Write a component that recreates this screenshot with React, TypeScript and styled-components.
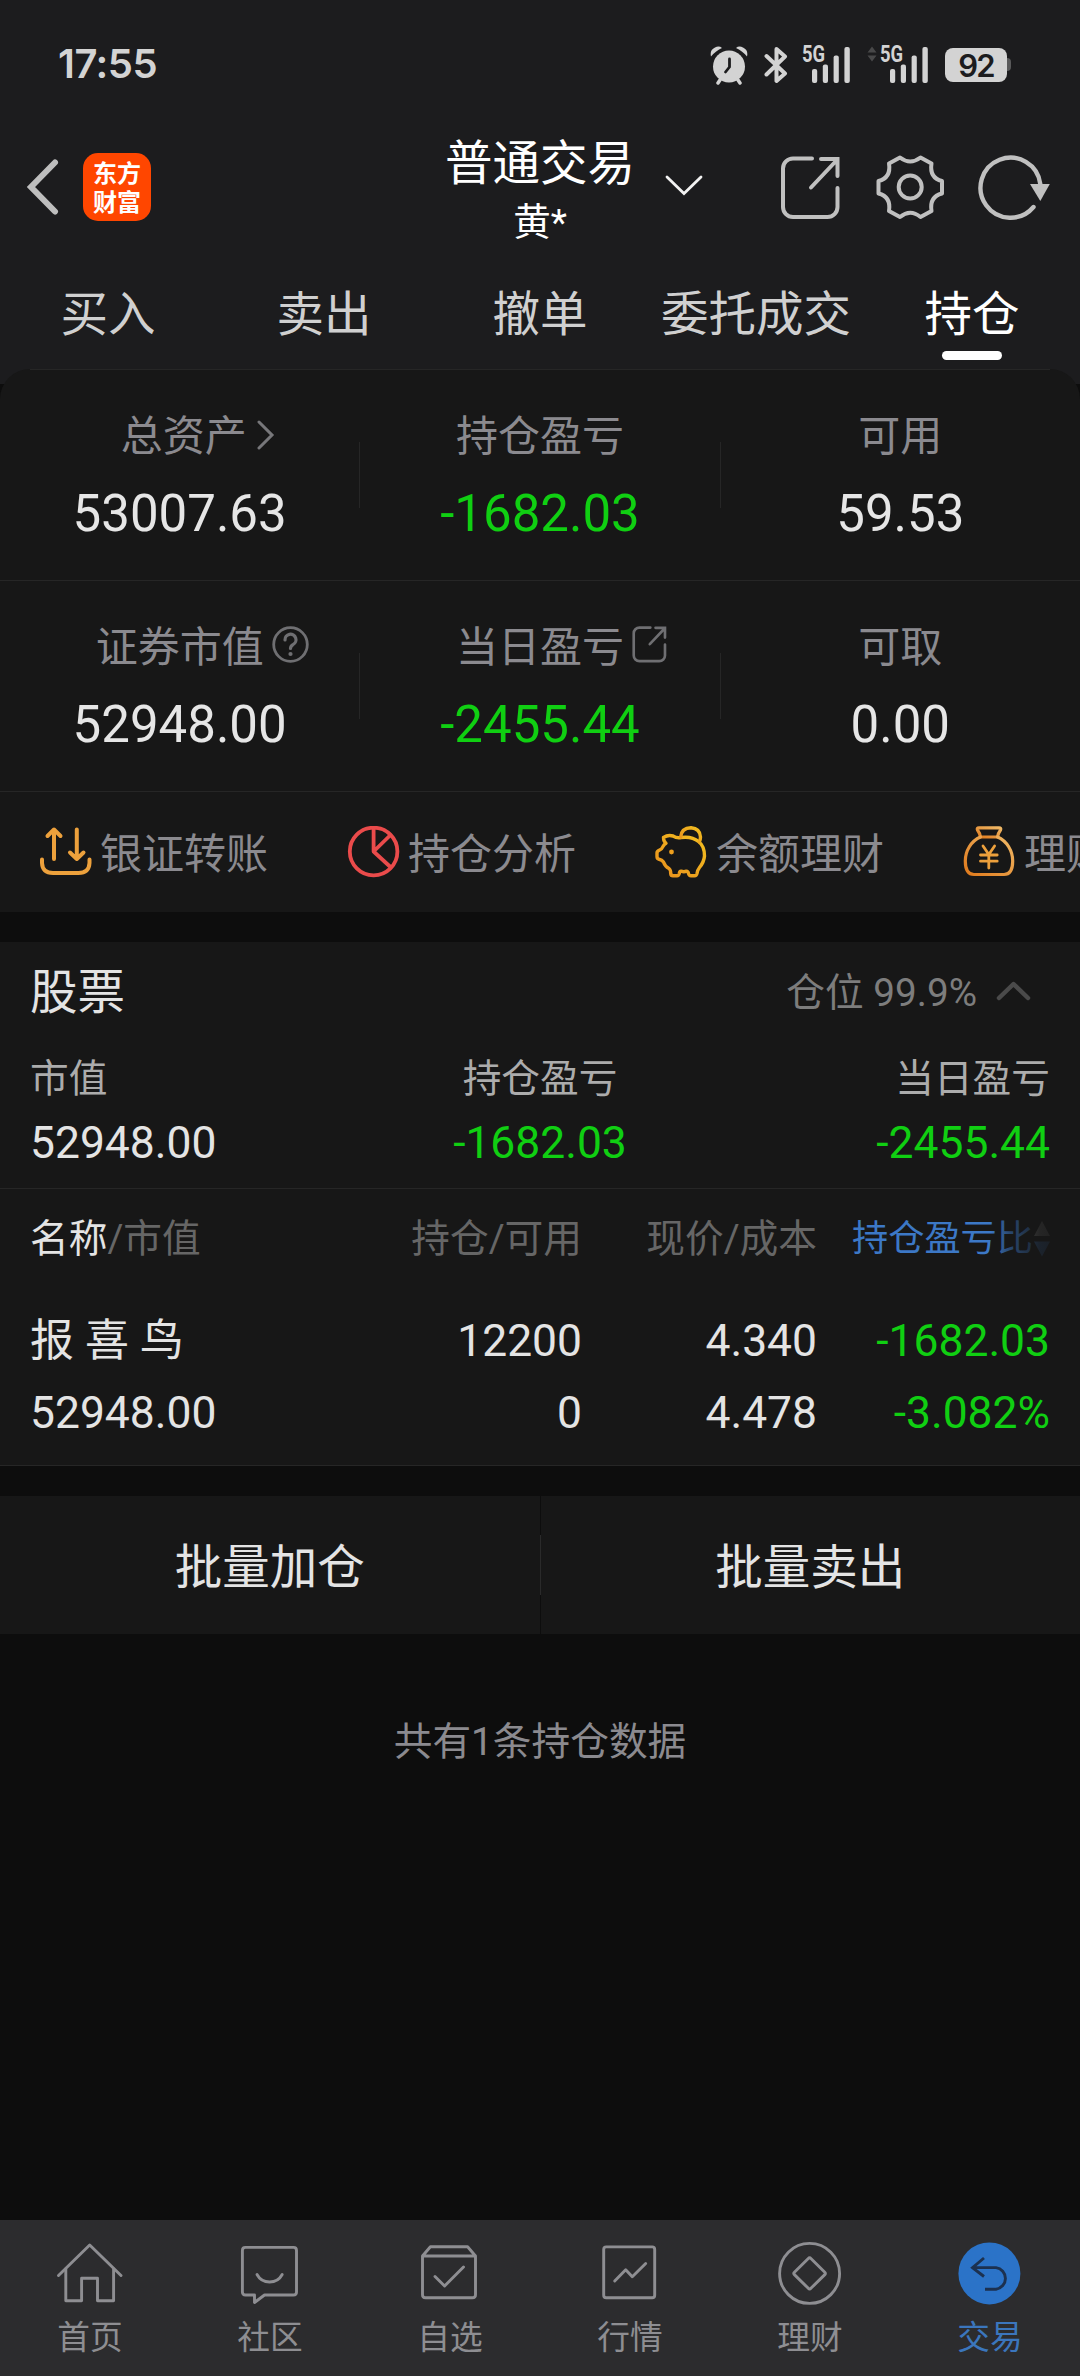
import React from "react";
import styled, { createGlobalStyle } from "styled-components";

const GlobalStyle = createGlobalStyle`
  * { box-sizing: border-box; }
  body { margin: 0; background: #0d0d0d; }
  svg { display: block; flex: none; }
`;

const green = "#10cf12";
const grey = "#8b8a8f";
const panel = "#171717";
const line = "#262626";

const Screen = styled.div`
  width: 1080px;
  min-height: 2376px;
  display: flex;
  flex-direction: column;
  background: #0d0d0d;
  color: #e4e4e4;
  font-family: Roboto, "Noto Sans CJK SC", sans-serif;
  white-space: nowrap;
  overflow: hidden;
`;

/* ---------- header ---------- */

const Header = styled.header`
  height: 369px;
  background: #1c1c1e;
`;

const StatusBar = styled.div`
  height: 128px;
  padding: 0 69px 0 58px;
  display: flex;
  justify-content: space-between;
  align-items: center;
`;

const Clock = styled.span`
  font: 600 40px/40px Inter, sans-serif;
  letter-spacing: -0.5px;
  color: #d3d3d3;
`;

const StatusIcons = styled.div`
  display: flex;
  align-items: center;
  height: 40px;
  padding-top: 1px;
`;

const Signal = styled.div<{ $gap: number }>`
  display: flex;
  align-items: flex-start;
  height: 38px;
  margin-left: ${(p) => p.$gap}px;
`;

const Net = styled.span`
  width: 10px;
  font: 700 23px/18px Roboto, sans-serif;
  transform: scaleX(0.8);
  transform-origin: left center;
  color: #d3d3d3;
`;

const Battery = styled.div`
  display: flex;
  align-items: center;
  margin-left: 17px;
`;

const BatteryBody = styled.div`
  width: 62px;
  height: 34px;
  border-radius: 8px;
  background: #d3d3d3;
  color: #1c1c1e;
  text-align: center;
  font: 600 31px/35px Inter, sans-serif;
  letter-spacing: -1.8px;
`;

const BatteryTip = styled.div`
  width: 4px;
  height: 13px;
  border-radius: 0 4px 4px 0;
  background: #5a5a5b;
`;

const TitleBar = styled.div`
  height: 118px;
  display: grid;
  grid-template-columns: 1fr auto 1fr;
`;

const TitleLeft = styled.div`
  display: flex;
  align-items: center;
  padding-left: 26px;
`;

const Logo = styled.div`
  width: 68px;
  height: 68px;
  margin-left: 24px;
  padding-top: 4px;
  border-radius: 15px;
  background: #ff4600;
  color: #fff;
  text-align: center;
  font: 700 24px/29px "Noto Sans CJK SC", sans-serif;
`;

const Titles = styled.div`
  padding-top: 6px;
  text-align: center;
  color: #fff;
`;

const Title = styled.div`
  font-size: 47.5px;
  line-height: 60px;
`;

const Account = styled.div`
  margin-top: 5px;
  font-size: 37.5px;
  line-height: 46px;
`;

const TitleRight = styled.div`
  display: flex;
  align-items: center;
  padding-left: 30px;
`;

const IconSlot = styled.span<{ $ml: number }>`
  margin-left: ${(p) => p.$ml}px;
`;

const Tabs = styled.nav`
  height: 123px;
  display: grid;
  grid-template-columns: repeat(5, 1fr);
`;

const Tab = styled.div<{ $on?: boolean }>`
  display: flex;
  flex-direction: column;
  align-items: center;
  padding-top: 39px;
  font-size: 47.5px;
  line-height: 60px;
  color: ${(p) => (p.$on ? "#fff" : "#d0d0d0")};
  &::after {
    content: "";
    width: 60px;
    height: 9px;
    margin-top: 6px;
    border-radius: 5px;
    background: ${(p) => (p.$on ? "#fff" : "transparent")};
  }
`;

/* ---------- assets ---------- */

const AssetWrap = styled.section`
  background: linear-gradient(#1c1c1e 15px, #0d0d0d 15px);
`;

const AssetPanel = styled.div`
  border-radius: 30px 30px 0 0;
  background: ${panel};
`;

const TopLine = styled.div`
  height: 1px;
  margin: 0 30px;
  background: ${line};
`;

const AssetRow = styled.div`
  height: 211px;
  display: flex;
  border-bottom: 1px solid ${line};
`;

const VLine = styled.div`
  width: 1px;
  height: 66px;
  margin-top: 72px;
  background: ${line};
`;

const AssetCell = styled.div`
  flex: 1;
  padding-top: 37px;
`;

const AssetLabel = styled.div<{ $shift?: number }>`
  display: grid;
  grid-template-columns: 1fr auto 1fr;
  align-items: center;
  height: 60px;
  padding-left: ${(p) => p.$shift || 0}px;
  font-size: 42px;
  line-height: 60px;
  color: ${grey};
`;

const LabelIcon = styled.span`
  grid-column: 3;
  padding: 0 0 7px 8px;
`;

const LabelText = styled.span`
  grid-column: 2;
`;

const AssetValue = styled.div<{ $down?: boolean }>`
  margin-top: 17px;
  text-align: center;
  font-size: 51px;
  line-height: 60px;
  color: ${(p) => (p.$down ? green : "#e6e6e6")};
`;

const QuickRow = styled.div`
  height: 120px;
  display: flex;
  align-items: center;
  gap: 79px;
  padding-left: 39px;
  overflow: hidden;
`;

const Quick = styled.div`
  flex: none;
  display: flex;
  align-items: center;
  gap: 7px;
  font-size: 42px;
  line-height: 60px;
  color: ${grey};
  padding-top: 5px;
  svg { margin-top: -5px; }
`;

/* ---------- holdings ---------- */

const Holdings = styled.section`
  margin-top: 30px;
  background: ${panel};
  border-bottom: 1px solid ${line};
`;

const SectionHead = styled.div`
  height: 104px;
  padding: 0 49px 3px 30px;
  display: flex;
  align-items: center;
`;

const SectionTitle = styled.h2`
  flex: 1;
  margin: 0;
  font-size: 47.5px;
  font-weight: 400;
  line-height: 60px;
`;

const Position = styled.span`
  margin-right: 19px;
  font-size: 38.7px;
  line-height: 54px;
  color: #7d7d7d;
`;

const Metrics = styled.div`
  display: grid;
  grid-template-columns: 1fr 1fr 1fr;
  padding: 6px 30px 15px;
  border-bottom: 1px solid ${line};
`;

const Metric = styled.div<{ $align: string }>`
  text-align: ${(p) => p.$align};
`;

const MetricLabel = styled.div`
  font-size: 38.7px;
  line-height: 54px;
  color: #acacac;
`;

const Num = styled.div<{ $down?: boolean; $mt?: number }>`
  margin-top: ${(p) => p.$mt || 0}px;
  font-size: 44.4px;
  line-height: 60px;
  color: ${(p) => (p.$down ? green : "#e4e4e4")};
`;

const Grid = styled.div`
  display: grid;
  grid-template-columns: 222px 330px 235px 233px;
  justify-items: end;
  padding-left: 30px;
  & > :nth-child(4n + 1) { justify-self: start; }
`;

const TableHead = styled(Grid)`
  position: relative;
  height: 101px;
  padding-bottom: 1px;
  align-items: center;
  font-size: 38.7px;
  line-height: 54px;
  color: #666;
`;

const HeadStrong = styled.b`
  font-weight: 400;
  color: #e4e4e4;
`;

const SortHead = styled.span`
  display: flex;
  align-items: center;
  gap: 1px;
  font-size: 36.2px;
  color: #3c78c6;
`;

const HeadFade = styled.div`
  position: absolute;
  top: 0;
  right: 0;
  width: 90px;
  height: 100%;
  background: linear-gradient(90deg, rgba(23, 23, 23, 0) 0, rgba(23, 23, 23, 0.5) 20px, rgba(23, 23, 23, 0.88) 50px, #171717);
`;

const TableBody = styled(Grid)`
  row-gap: 12px;
  padding-top: 21px;
  padding-bottom: 22px;
`;

const StockName = styled(Num)`
  font-size: 44px;
`;

const Batch = styled.div`
  display: flex;
  height: 138px;
  margin-top: 30px;
  background: ${panel};
`;

const BatchButton = styled.button`
  flex: 1;
  padding: 6px 0 0;
  border: 0;
  background: none;
  color: #e4e4e4;
  font: 47.5px/60px Roboto, "Noto Sans CJK SC", sans-serif;
`;

const BatchDivider = styled.div`
  width: 1px;
  background: linear-gradient(#0d0d0d 39px, #2a2a2a 39px 99px, #0d0d0d 99px);
`;

const Summary = styled.div`
  margin-top: 78px;
  text-align: center;
  font-size: 38.7px;
  line-height: 60px;
  color: ${grey};
`;

/* ---------- bottom navigation ---------- */

const BottomNav = styled.nav`
  height: 156px;
  margin-top: auto;
  display: grid;
  grid-template-columns: repeat(6, 1fr);
  background: #2c2c2e;
`;

const NavItem = styled.div<{ $on?: boolean }>`
  display: flex;
  flex-direction: column;
  align-items: center;
  padding-top: 21px;
  font-size: 32.7px;
  line-height: 40px;
  color: ${(p) => (p.$on ? "#3b76bd" : "#8e8e92")};
  svg { margin-bottom: 11px; }
`;

/* ---------- icons ---------- */

const AlarmIcon = () => (
  <svg width="38" height="40" viewBox="0 0 38 40" fill="#d3d3d3">
    <path d="M1 11.500 Q-0.500 5 5 2.500 Q9 0.500 12 3 Q6 5.500 1 11.500 Z" />
    <path d="M37 11.500 Q38.500 5 33 2.500 Q29 0.500 26 3 Q32 5.500 37 11.500 Z" />
    <circle cx="19" cy="21.500" r="16" />
    <path d="M10 35 L8 38 M28 35 L30 38" stroke="#d3d3d3" strokeWidth="3.500" strokeLinecap="round" />
    <path d="M19.500 14 V22 L15.500 27" fill="none" stroke="#1c1c1e" strokeWidth="2.800" strokeLinecap="round" strokeLinejoin="round" />
  </svg>
);

const BluetoothIcon = () => (
  <svg width="24" height="38" viewBox="0 0 24 38" fill="none" stroke="#d3d3d3" strokeWidth="4" strokeLinecap="round" strokeLinejoin="round">
    <path d="M2.500 10 L21 27.500 L12.500 35 V3 L21 10.500 L2.500 28.500" />
  </svg>
);

const SignalBars = () => (
  <svg width="38" height="38" viewBox="0 0 38 38" fill="#d3d3d3">
    <rect x="0" y="23" width="5.200" height="14" rx="2" />
    <rect x="10.800" y="18.500" width="5.200" height="18.500" rx="2" />
    <rect x="21.600" y="9.500" width="5.200" height="27.500" rx="2" />
    <rect x="32.400" y="1" width="5.400" height="36" rx="2" />
  </svg>
);

const DataArrows = () => (
  <svg width="10" height="38" viewBox="0 0 10 38" fill="#484849">
    <path d="M5 0.500 L9.500 6.500 H0.500 Z M0.500 9.500 H9.500 L5 15.500 Z" />
  </svg>
);

const BackIcon = () => (
  <svg width="33" height="60" viewBox="0 0 33 60" fill="none" stroke="#bebebe" strokeWidth="6" strokeLinecap="round" strokeLinejoin="miter">
    <path d="M29 5.500 L5 30 L29 54.500" />
  </svg>
);

const DownIcon = () => (
  <svg width="38" height="24" viewBox="0 0 38 24" fill="none" stroke="#f2f2f2" strokeWidth="2.800" strokeLinecap="round">
    <path d="M2 2 L19 18.500 L36 2" />
  </svg>
);

const ExportIcon = ({ size, color, width }: { size: number; color: string; width: number }) => (
  <svg width={size} height={(size * 67) / 61} viewBox="0 0 61 67" fill="none" stroke={color} strokeWidth={width} strokeLinecap="round">
    <path d="M32 4.500 H13 A10 10 0 0 0 3 14.500 V53 A10 10 0 0 0 13 63 H47.500 A10 10 0 0 0 57.500 53 V34" />
    <path d="M41 5 H57.500 V22 M56 7 L31 33.500" />
  </svg>
);

const GearIcon = () => (
  <svg width="68" height="68" viewBox="0 0 68 68" fill="none" stroke="#c0c0c0" strokeWidth="4" strokeLinejoin="round">
    <path d="M24 4.500 Q34.200 12.500 44.500 4.500 L55.500 10.500 C54 20 58 26 66 28 V40.500 C58 42.500 54 48.500 55.500 58 L44.500 64 Q34.200 55.500 24 64 L13 58 C14.500 48.500 10.500 42.500 2.500 40.500 V28 C10.500 26 14.500 20 13 10.500 Z" />
    <circle cx="34.200" cy="34" r="11.500" />
  </svg>
);

const RefreshIcon = () => (
  <svg width="73" height="68" viewBox="0 0 73 68" fill="none" stroke="#c0c0c0" strokeWidth="4.400" strokeLinecap="round">
    <path d="M55.500 54 A30 30 0 1 1 62.300 31" />
    <path d="M52 31 H71.800 L62.300 48 Z" fill="#c0c0c0" stroke="none" />
  </svg>
);

const RightIcon = () => (
  <svg width="24" height="32" viewBox="0 0 24 32" fill="none" stroke="#77777a" strokeWidth="3" strokeLinecap="round">
    <path d="M4 4 L17 17 L4 30" />
  </svg>
);

const HelpIcon = () => (
  <svg width="37" height="37" viewBox="0 0 37 37" fill="none" stroke="#6f6f72" strokeWidth="2.800" strokeLinecap="round">
    <circle cx="18.500" cy="18.500" r="16.800" />
    <path d="M13 14 A5.500 5.500 0 1 1 21 18.600 Q18.500 20.200 18.500 22.500" strokeWidth="3.200" />
    <circle cx="18.500" cy="28" r="2.100" fill="#6f6f72" stroke="none" />
  </svg>
);

const TransferIcon = () => (
  <svg width="54" height="52" viewBox="0 0 54 52" fill="none" stroke="#eda13c" strokeWidth="4" strokeLinecap="round" strokeLinejoin="round">
    <path d="M15 33 V3.500 M8.500 10 L15 3.500 L21.500 10" />
    <path d="M37.800 3.500 V33 M31 26.500 L37.800 33 L44.500 26.500" />
    <path d="M3 33.500 V37 Q3.500 47 14 47 H39.500 Q50 47 50.500 37 V33.500" />
  </svg>
);

const PieIcon = () => (
  <svg width="54" height="52" viewBox="0 0 54 52" fill="none" stroke="#ea4b4b" strokeWidth="3.800" strokeLinejoin="round">
    <circle cx="26.600" cy="25.500" r="23.800" />
    <path d="M26.600 2 V25.500 L43.500 9 M26.600 25.500 L44 41.500" />
  </svg>
);

const PigIcon = () => (
  <svg width="54" height="52" viewBox="0 0 54 52" fill="none" stroke="url(#pig)" strokeWidth="3.400" strokeLinecap="round" strokeLinejoin="round">
    <defs>
      <linearGradient id="pig" x1="0" y1="1" x2="1" y2="0">
        <stop offset="0" stopColor="#e88f1d" />
        <stop offset="1" stopColor="#f3c020" />
      </linearGradient>
    </defs>
    <path d="M8.500 11.500 Q13 8.500 18 10 Q22 12.500 26 11.500 Q37 10 43.500 15.500 Q49.500 20 49.500 30 Q49 36 44.500 41.500 Q42.500 44 42 47.500 Q41.500 49.800 39.500 49.800 H36 Q34 49.800 33.500 47.500 Q33 45.200 31.500 45.200 Q29 46.200 26 45.200 Q24.500 45.200 24.300 47.500 Q23.800 49.800 22 49.800 H18 Q15.900 49.800 15.700 47.500 Q15.900 44 14 42.500 Q10 40.500 8.500 36 Q7 33.800 4 33.300 Q2 32.800 2 30.500 V27 Q2 25 4 24.300 Q7 23.300 8 20.500 Q9 18.500 11 17.300 Q8.500 15.500 8.500 11.500 Z" />
    <path d="M25.700 11 Q26.500 2 36 1.800 Q45 2.500 45.500 11 Q45.500 13.500 44.300 16" />
    <circle cx="16.500" cy="26" r="2.400" fill="#eea01e" stroke="none" />
  </svg>
);

const BagIcon = () => (
  <svg width="54" height="52" viewBox="0 0 54 52" fill="none" stroke="url(#bag)" strokeWidth="3.200" strokeLinecap="round" strokeLinejoin="round">
    <defs>
      <linearGradient id="bag" x1="0" y1="1" x2="1" y2="0">
        <stop offset="0" stopColor="#e07a1c" />
        <stop offset="1" stopColor="#f0b967" />
      </linearGradient>
    </defs>
    <path d="M17.500 11 Q17 7.500 14.500 4 Q13.500 1.800 16 1.800 H36 Q38.500 1.800 37.500 4 Q35 7.500 34.500 11 Z" />
    <path d="M17.500 11 C8 15 2.300 25 2.300 35 C2.300 43 5 48.500 11 48.500 H41 C47 48.500 49.700 43 49.700 35 C49.700 25 44 15 34.500 11" />
    <path d="M20 20 L25.800 28.500 L31.600 20 M25.800 29 V42 M17.500 29 H34.200 M17.500 35.200 H34.200" stroke="#eca03c" strokeWidth="2.800" />
  </svg>
);

const UpIcon = () => (
  <svg width="35" height="24" viewBox="0 0 35 24" fill="none" stroke="#4a4a4a" strokeWidth="4.500" strokeLinecap="round" strokeLinejoin="round">
    <path d="M3 17 L17.500 3 L32 17" />
  </svg>
);

const SortIcon = () => (
  <svg width="16" height="38" viewBox="0 0 16 38">
    <path d="M8 1 L16 16 H0 Z" fill="#8c8c8c" />
    <path d="M0 21.500 H16 L8 36.500 Z" fill="#3c78c6" />
  </svg>
);

const NavSvg = ({ children }: { children: React.ReactNode }) => (
  <svg width="66" height="66" viewBox="0 0 66 66" fill="none" stroke="#8e8e92" strokeWidth="2.900" strokeLinecap="round" strokeLinejoin="round">
    {children}
  </svg>
);

const navItems: { label: string; on?: boolean; icon: React.ReactNode }[] = [
  {
    label: "首页",
    icon: (
      <>
        <path d="M1.500 34.500 L32.700 4 L64 34.500" />
        <path d="M8.800 28 V59.700 H24.600 V37.300 H40.500 V59.700 H56.600 V28" />
      </>
    ),
  },
  {
    label: "社区",
    icon: (
      <>
        <path d="M8.400 6.400 H56.500 Q59.500 6.400 59.500 9.400 V51 Q59.500 54 56.500 54 H27.500 L17.500 61.500 V54 H8.400 Q5.400 54 5.400 51 V9.400 Q5.400 6.400 8.400 6.400 Z" />
        <path d="M20 33.500 Q24 41 32.600 41 Q41.200 41 45.200 33.500" />
      </>
    ),
  },
  {
    label: "自选",
    icon: (
      <>
        <path d="M5.500 15 L13.400 5.800 H50.600 L58.500 15 V53.700 Q58.500 56.700 55.500 56.700 H8.500 Q5.500 56.700 5.500 53.700 Z M5.500 15 H58.500" />
        <path d="M18 35.500 L27.600 45 L46.500 26" />
      </>
    ),
  },
  {
    label: "行情",
    icon: (
      <>
        <rect x="6.700" y="5.900" width="51" height="50.800" rx="2.500" />
        <path d="M17.700 40 L28.700 28.700 L35.300 35.800 L48.700 22.500" />
      </>
    ),
  },
  {
    label: "理财",
    icon: (
      <>
        <circle cx="32.600" cy="32.400" r="30" />
        <path d="M31.300 17.500 Q32.600 16 33.900 17.500 L47.800 31.200 Q49 32.400 47.800 33.600 L33.900 47.300 Q32.600 48.800 31.300 47.300 L17.400 33.600 Q16.200 32.400 17.400 31.200 Z" />
      </>
    ),
  },
  {
    label: "交易",
    on: true,
    icon: (
      <>
        <circle cx="32.400" cy="32.400" r="31" fill="#2b73c8" stroke="none" />
        <path d="M27 17 L15.500 26.600 L27 35.500 M15.500 26.600 H39 A10.900 10.900 0 0 1 39 48.200 H28" stroke="#1c3150" strokeLinecap="butt" strokeLinejoin="miter" />
      </>
    ),
  },
];

const quickItems = [
  { label: "银证转账", icon: <TransferIcon /> },
  { label: "持仓分析", icon: <PieIcon /> },
  { label: "余额理财", icon: <PigIcon /> },
  { label: "理财", icon: <BagIcon /> },
];

type Asset = { label: string; value: string; down?: boolean; icon?: React.ReactNode; shift?: number };

const assetRows: Asset[][] = [
  [
    { label: "总资产", value: "53007.63", icon: <RightIcon />, shift: 8 },
    { label: "持仓盈亏", value: "-1682.03", down: true },
    { label: "可用", value: "59.53" },
  ],
  [
    { label: "证券市值", value: "52948.00", icon: <HelpIcon /> },
    { label: "当日盈亏", value: "-2455.44", down: true, icon: <ExportIcon size={35} color="#6f6f72" width={4.6} /> },
    { label: "可取", value: "0.00" },
  ],
];

export default function App() {
  return (
    <Screen>
      <GlobalStyle />
      <Header>
        <StatusBar>
          <Clock>17:55</Clock>
          <StatusIcons>
            <AlarmIcon />
            <IconSlot $ml={16}><BluetoothIcon /></IconSlot>
            <Signal $gap={14}><Net>5G</Net><SignalBars /></Signal>
            <Signal $gap={17}><DataArrows /></Signal>
            <Signal $gap={3}><Net>5G</Net><SignalBars /></Signal>
            <Battery><BatteryBody>92</BatteryBody><BatteryTip /></Battery>
          </StatusIcons>
        </StatusBar>
        <TitleBar>
          <TitleLeft>
            <BackIcon />
            <Logo>东方<br />财富</Logo>
          </TitleLeft>
          <Titles>
            <Title>普通交易</Title>
            <Account>黄*</Account>
          </Titles>
          <TitleRight>
            <DownIcon />
            <IconSlot $ml={77}><ExportIcon size={61} color="#c0c0c0" width={4} /></IconSlot>
            <IconSlot $ml={35}><GearIcon /></IconSlot>
            <IconSlot $ml={34}><RefreshIcon /></IconSlot>
          </TitleRight>
        </TitleBar>
        <Tabs>
          <Tab>买入</Tab>
          <Tab>卖出</Tab>
          <Tab>撤单</Tab>
          <Tab>委托成交</Tab>
          <Tab $on>持仓</Tab>
        </Tabs>
      </Header>

      <AssetWrap>
        <AssetPanel>
          <TopLine />
          {assetRows.map((row, r) => (
            <AssetRow key={r}>
              {row.map((a, i) => (
                <React.Fragment key={a.label}>
                  {i > 0 && <VLine />}
                  <AssetCell>
                    <AssetLabel $shift={a.shift}>
                      <LabelText>{a.label}</LabelText>
                      {a.icon && <LabelIcon>{a.icon}</LabelIcon>}
                    </AssetLabel>
                    <AssetValue $down={a.down}>{a.value}</AssetValue>
                  </AssetCell>
                </React.Fragment>
              ))}
            </AssetRow>
          ))}
          <QuickRow>
            {quickItems.map((q) => (
              <Quick key={q.label}>{q.icon}{q.label}</Quick>
            ))}
          </QuickRow>
        </AssetPanel>
      </AssetWrap>

      <Holdings>
        <SectionHead>
          <SectionTitle>股票</SectionTitle>
          <Position>仓位 99.9%</Position>
          <UpIcon />
        </SectionHead>
        <Metrics>
          <Metric $align="left"><MetricLabel>市值</MetricLabel><Num $mt={7}>52948.00</Num></Metric>
          <Metric $align="center"><MetricLabel>持仓盈亏</MetricLabel><Num $mt={7} $down>-1682.03</Num></Metric>
          <Metric $align="right"><MetricLabel>当日盈亏</MetricLabel><Num $mt={7} $down>-2455.44</Num></Metric>
        </Metrics>
        <TableHead>
          <span><HeadStrong>名称</HeadStrong>/市值</span>
          <span>持仓/可用</span>
          <span>现价/成本</span>
          <SortHead>持仓盈亏比<SortIcon /></SortHead>
          <HeadFade />
        </TableHead>
        <TableBody>
          <StockName>报 喜 鸟</StockName>
          <Num>12200</Num>
          <Num>4.340</Num>
          <Num $down>-1682.03</Num>
          <Num>52948.00</Num>
          <Num>0</Num>
          <Num>4.478</Num>
          <Num $down>-3.082%</Num>
        </TableBody>
      </Holdings>

      <Batch>
        <BatchButton>批量加仓</BatchButton>
        <BatchDivider />
        <BatchButton>批量卖出</BatchButton>
      </Batch>
      <Summary>共有1条持仓数据</Summary>

      <BottomNav>
        {navItems.map((n) => (
          <NavItem key={n.label} $on={n.on}>
            <NavSvg>{n.icon}</NavSvg>
            {n.label}
          </NavItem>
        ))}
      </BottomNav>
    </Screen>
  );
}
